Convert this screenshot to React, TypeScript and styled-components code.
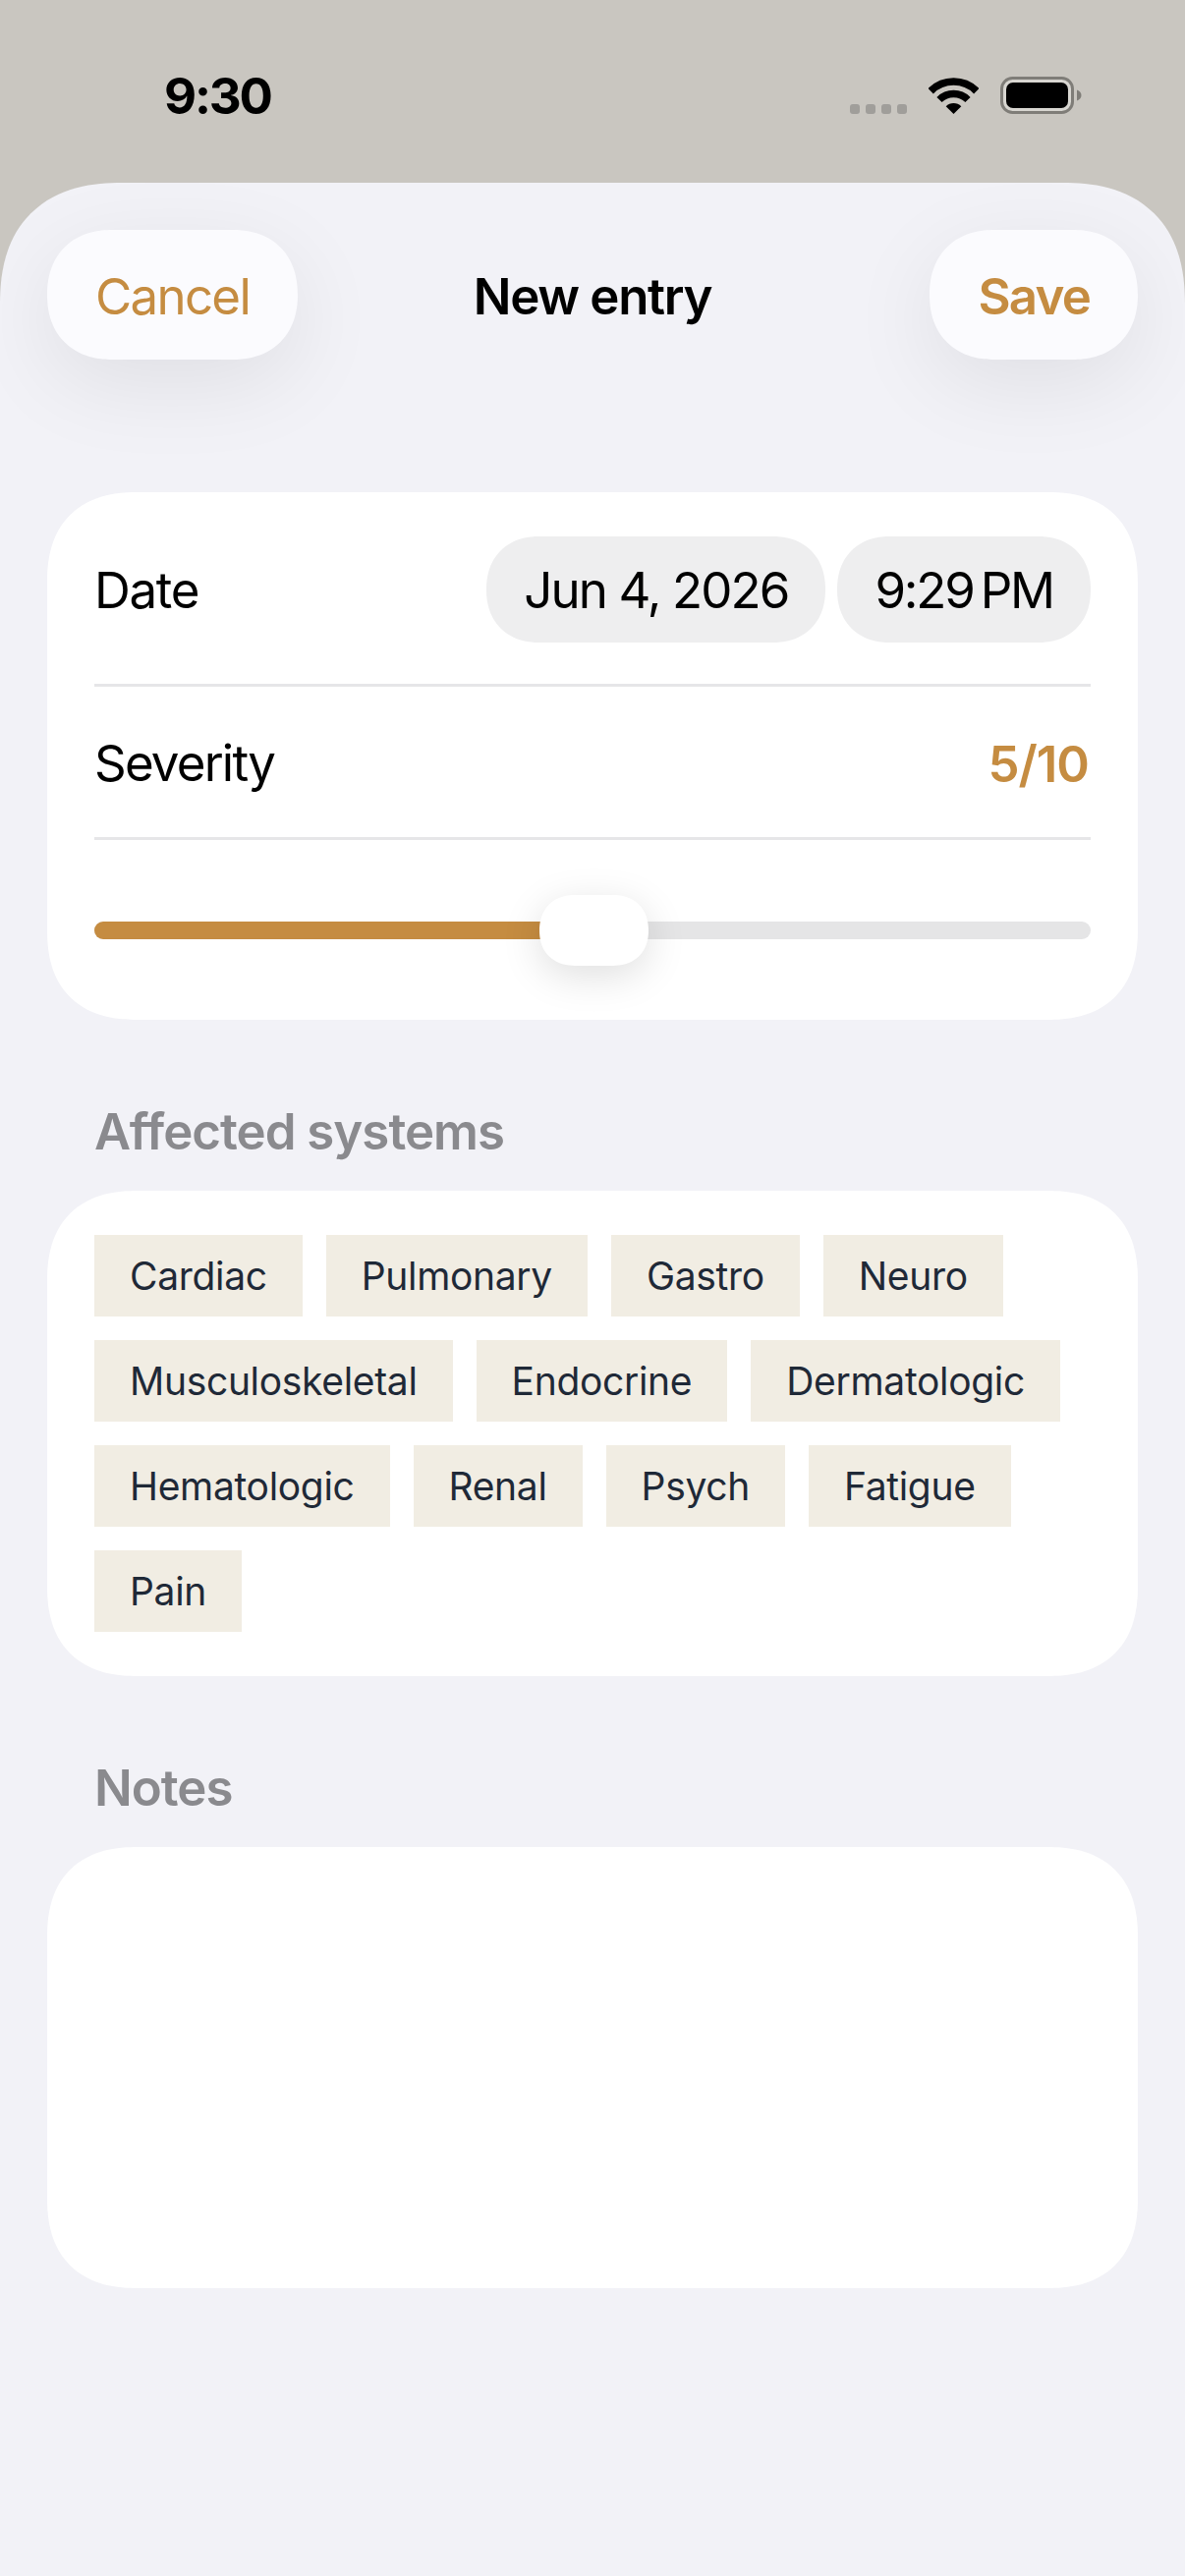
import styled, { createGlobalStyle } from 'styled-components';

const SYSTEMS = [
    'Cardiac', 'Pulmonary', 'Gastro', 'Neuro',
    'Musculoskeletal', 'Endocrine', 'Dermatologic',
    'Hematologic', 'Renal', 'Psych', 'Fatigue',
    'Pain',
];

const severity = 5;

export default function App() {
    return (
        <>
            <GlobalStyle />
            <Screen>
                <StatusBar>
                    <Clock>9:30</Clock>
                    <StatusIcons>
                        <SignalDots>
                            <Dot /><Dot /><Dot /><Dot />
                        </SignalDots>
                        <svg width="51" height="37" viewBox="0 0 51 37">
                            <path d="M2.2 13.7A33 33 0 0 1 48.8 13.7" fill="none" stroke="#000" strokeWidth="7.6" />
                            <path d="M11 22.5A20.5 20.5 0 0 1 40 22.5" fill="none" stroke="#000" strokeWidth="7.4" />
                            <path d="M25.5 37L17.7 29.2A11 11 0 0 1 33.3 29.2Z" fill="#000" />
                        </svg>
                        <svg width="83" height="38" viewBox="0 0 83 38">
                            <rect x="1.5" y="1.5" width="72" height="35" rx="11" fill="#d8d6d1" stroke="#7f7d78" strokeWidth="3" />
                            <rect x="6" y="6" width="63" height="26" rx="7" fill="#000" />
                            <path d="M78 13.5C81 14.5 82.5 16.5 82.5 19C82.5 21.5 81 23.5 78 24.5Z" fill="#7f7d78" />
                        </svg>
                    </StatusIcons>
                </StatusBar>

                <Sheet>
                    <NavBar>
                        <NavLeft>
                            <NavButton>Cancel</NavButton>
                        </NavLeft>
                        <NavTitle>New entry</NavTitle>
                        <NavRight>
                            <NavButton $primary>Save</NavButton>
                        </NavRight>
                    </NavBar>

                    <MainCard>
                        <DateRow>
                            <RowLabel>Date</RowLabel>
                            <Pills>
                                <Pill>Jun 4, 2026</Pill>
                                <Pill $tight>9:29{'\u2009'}PM</Pill>
                            </Pills>
                        </DateRow>
                        <SeverityRow>
                            <RowLabel $tight>Severity</RowLabel>
                            <SeverityValue>{severity}/10</SeverityValue>
                        </SeverityRow>
                        <SliderRow>
                            <Track>
                                <TrackFill style={{ width: `${severity * 10}%` }} />
                                <Thumb style={{ left: `calc(${severity * 10}% - 54px)` }} />
                            </Track>
                        </SliderRow>
                    </MainCard>

                    <SectionLabel>Affected systems</SectionLabel>
                    <ChipCard>
                        {SYSTEMS.map((name) => (
                            <Chip key={name}>{name}</Chip>
                        ))}
                    </ChipCard>

                    <SectionLabel>Notes</SectionLabel>
                    <NotesCard />
                </Sheet>
            </Screen>
        </>
    );
}

const GlobalStyle = createGlobalStyle`
    html, body {
        margin: 0;
        padding: 0;
        background: #c9c6c0;
    }
    * {
        box-sizing: border-box;
    }
`;

const Screen = styled.div`
    width: 1206px;
    height: 2622px;
    display: flex;
    flex-direction: column;
    overflow: hidden;
    background: #c9c6c0;
    font-family: Inter, 'Noto Sans', sans-serif;
    color: #000;
`;

const StatusBar = styled.div`
    height: 186px;
    flex-shrink: 0;
    display: flex;
    justify-content: space-between;
    align-items: flex-start;
    padding: 70px 105px 0 167px;
`;

const Clock = styled.div`
    font-size: 51px;
    line-height: 56px;
    font-weight: 700;
    letter-spacing: -2.2px;
`;

const StatusIcons = styled.div`
    display: flex;
    align-items: flex-end;
    gap: 22px;
    padding-top: 8px;
`;

const SignalDots = styled.div`
    display: flex;
    gap: 6px;
`;

const Dot = styled.div`
    width: 10px;
    height: 10px;
    border-radius: 3px;
    background: #a09e9a;
`;

const Sheet = styled.div`
    flex: 1;
    display: flex;
    flex-direction: column;
    padding: 48px 48px 0;
    overflow: hidden;
    background: #f2f2f7;
    border-radius: 124px 124px 0 0;
    corner-shape: superellipse(1.25);
`;

const NavBar = styled.div`
    height: 132px;
    flex-shrink: 0;
    display: grid;
    grid-template-columns: 1fr auto 1fr;
    align-items: center;
    margin-bottom: 135px;
`;

const NavLeft = styled.div`
    display: flex;
    justify-content: flex-start;
`;

const NavRight = styled.div`
    display: flex;
    justify-content: flex-end;
`;

const NavButton = styled.div<{ $primary?: boolean }>`
    height: 132px;
    padding: 3px 49px 0;
    display: flex;
    align-items: center;
    border-radius: 66px;
    corner-shape: superellipse(1.15);
    background: #fbfbfe;
    box-shadow: 0 24px 90px rgba(0, 0, 0, 0.08);
    color: #c58c41;
    font-size: 51px;
    font-weight: ${(props) => (props.$primary ? 600 : 400)};
    letter-spacing: ${(props) => (props.$primary ? '-1.8px' : '-1.7px')};
`;

const NavTitle = styled.div`
    padding-top: 3px;
    font-size: 51px;
    font-weight: 600;
    letter-spacing: -1.3px;
`;

const MainCard = styled.div`
    height: 537px;
    flex-shrink: 0;
    display: flex;
    flex-direction: column;
    padding: 0 48px;
    background: #fff;
    border-radius: 92px;
    corner-shape: superellipse(1.25);
`;

const DateRow = styled.div`
    height: 198px;
    flex-shrink: 0;
    padding-top: 2px;
    display: flex;
    justify-content: space-between;
    align-items: center;
    border-bottom: 3px solid #e6e6e8;
`;

const SeverityRow = styled.div`
    height: 156px;
    flex-shrink: 0;
    display: flex;
    justify-content: space-between;
    align-items: center;
    border-bottom: 3px solid #e6e6e8;
`;

const RowLabel = styled.div<{ $tight?: boolean }>`
    padding-top: 2px;
    font-size: 51px;
    letter-spacing: ${(props) => (props.$tight ? '-1.8px' : '-1.3px')};
`;

const Pills = styled.div`
    display: flex;
    gap: 12px;
`;

const Pill = styled.div<{ $tight?: boolean }>`
    height: 108px;
    padding: 2px 38px 0;
    display: flex;
    align-items: center;
    border-radius: 54px;
    corner-shape: superellipse(1.15);
    background: #eeeeef;
    font-size: 51px;
    letter-spacing: ${(props) => (props.$tight ? '-2.2px' : '-1.9px')};
`;

const SeverityValue = styled.div`
    padding: 3px 2px 0 0;
    font-size: 51px;
    font-weight: 600;
    letter-spacing: -1px;
    color: #c58c41;
`;

const SliderRow = styled.div`
    flex: 1;
    display: flex;
    align-items: center;
`;

const Track = styled.div`
    width: 100%;
    height: 18px;
    position: relative;
    border-radius: 9px;
    background: #e5e5e6;
`;

const TrackFill = styled.div`
    height: 100%;
    border-radius: 9px 0 0 9px;
    background: #c58c41;
`;

const Thumb = styled.div`
    position: absolute;
    top: -27px;
    width: 111px;
    height: 72px;
    border-radius: 36px;
    corner-shape: superellipse(1.15);
    background: #fff;
    box-shadow: 0 10px 40px rgba(0, 0, 0, 0.13);
`;

const SectionLabel = styled.div`
    height: 174px;
    flex-shrink: 0;
    display: flex;
    align-items: flex-end;
    padding: 0 0 30px 48px;
    font-size: 51px;
    font-weight: 600;
    letter-spacing: -1px;
    color: #8a8a8e;
`;

const ChipCard = styled.div`
    height: 494px;
    flex-shrink: 0;
    display: flex;
    flex-wrap: wrap;
    align-content: flex-start;
    gap: 24px;
    padding: 45px 48px;
    background: #fff;
    border-radius: 92px;
    corner-shape: superellipse(1.25);
`;

const Chip = styled.div`
    padding: 12px 36px;
    background: #f1ede3;
    color: #1f2937;
    font-size: 39px;
    line-height: 59px;
    letter-spacing: -0.32px;
`;

const NotesCard = styled.div`
    height: 449px;
    flex-shrink: 0;
    background: #fff;
    border-radius: 92px;
    corner-shape: superellipse(1.25);
`;
